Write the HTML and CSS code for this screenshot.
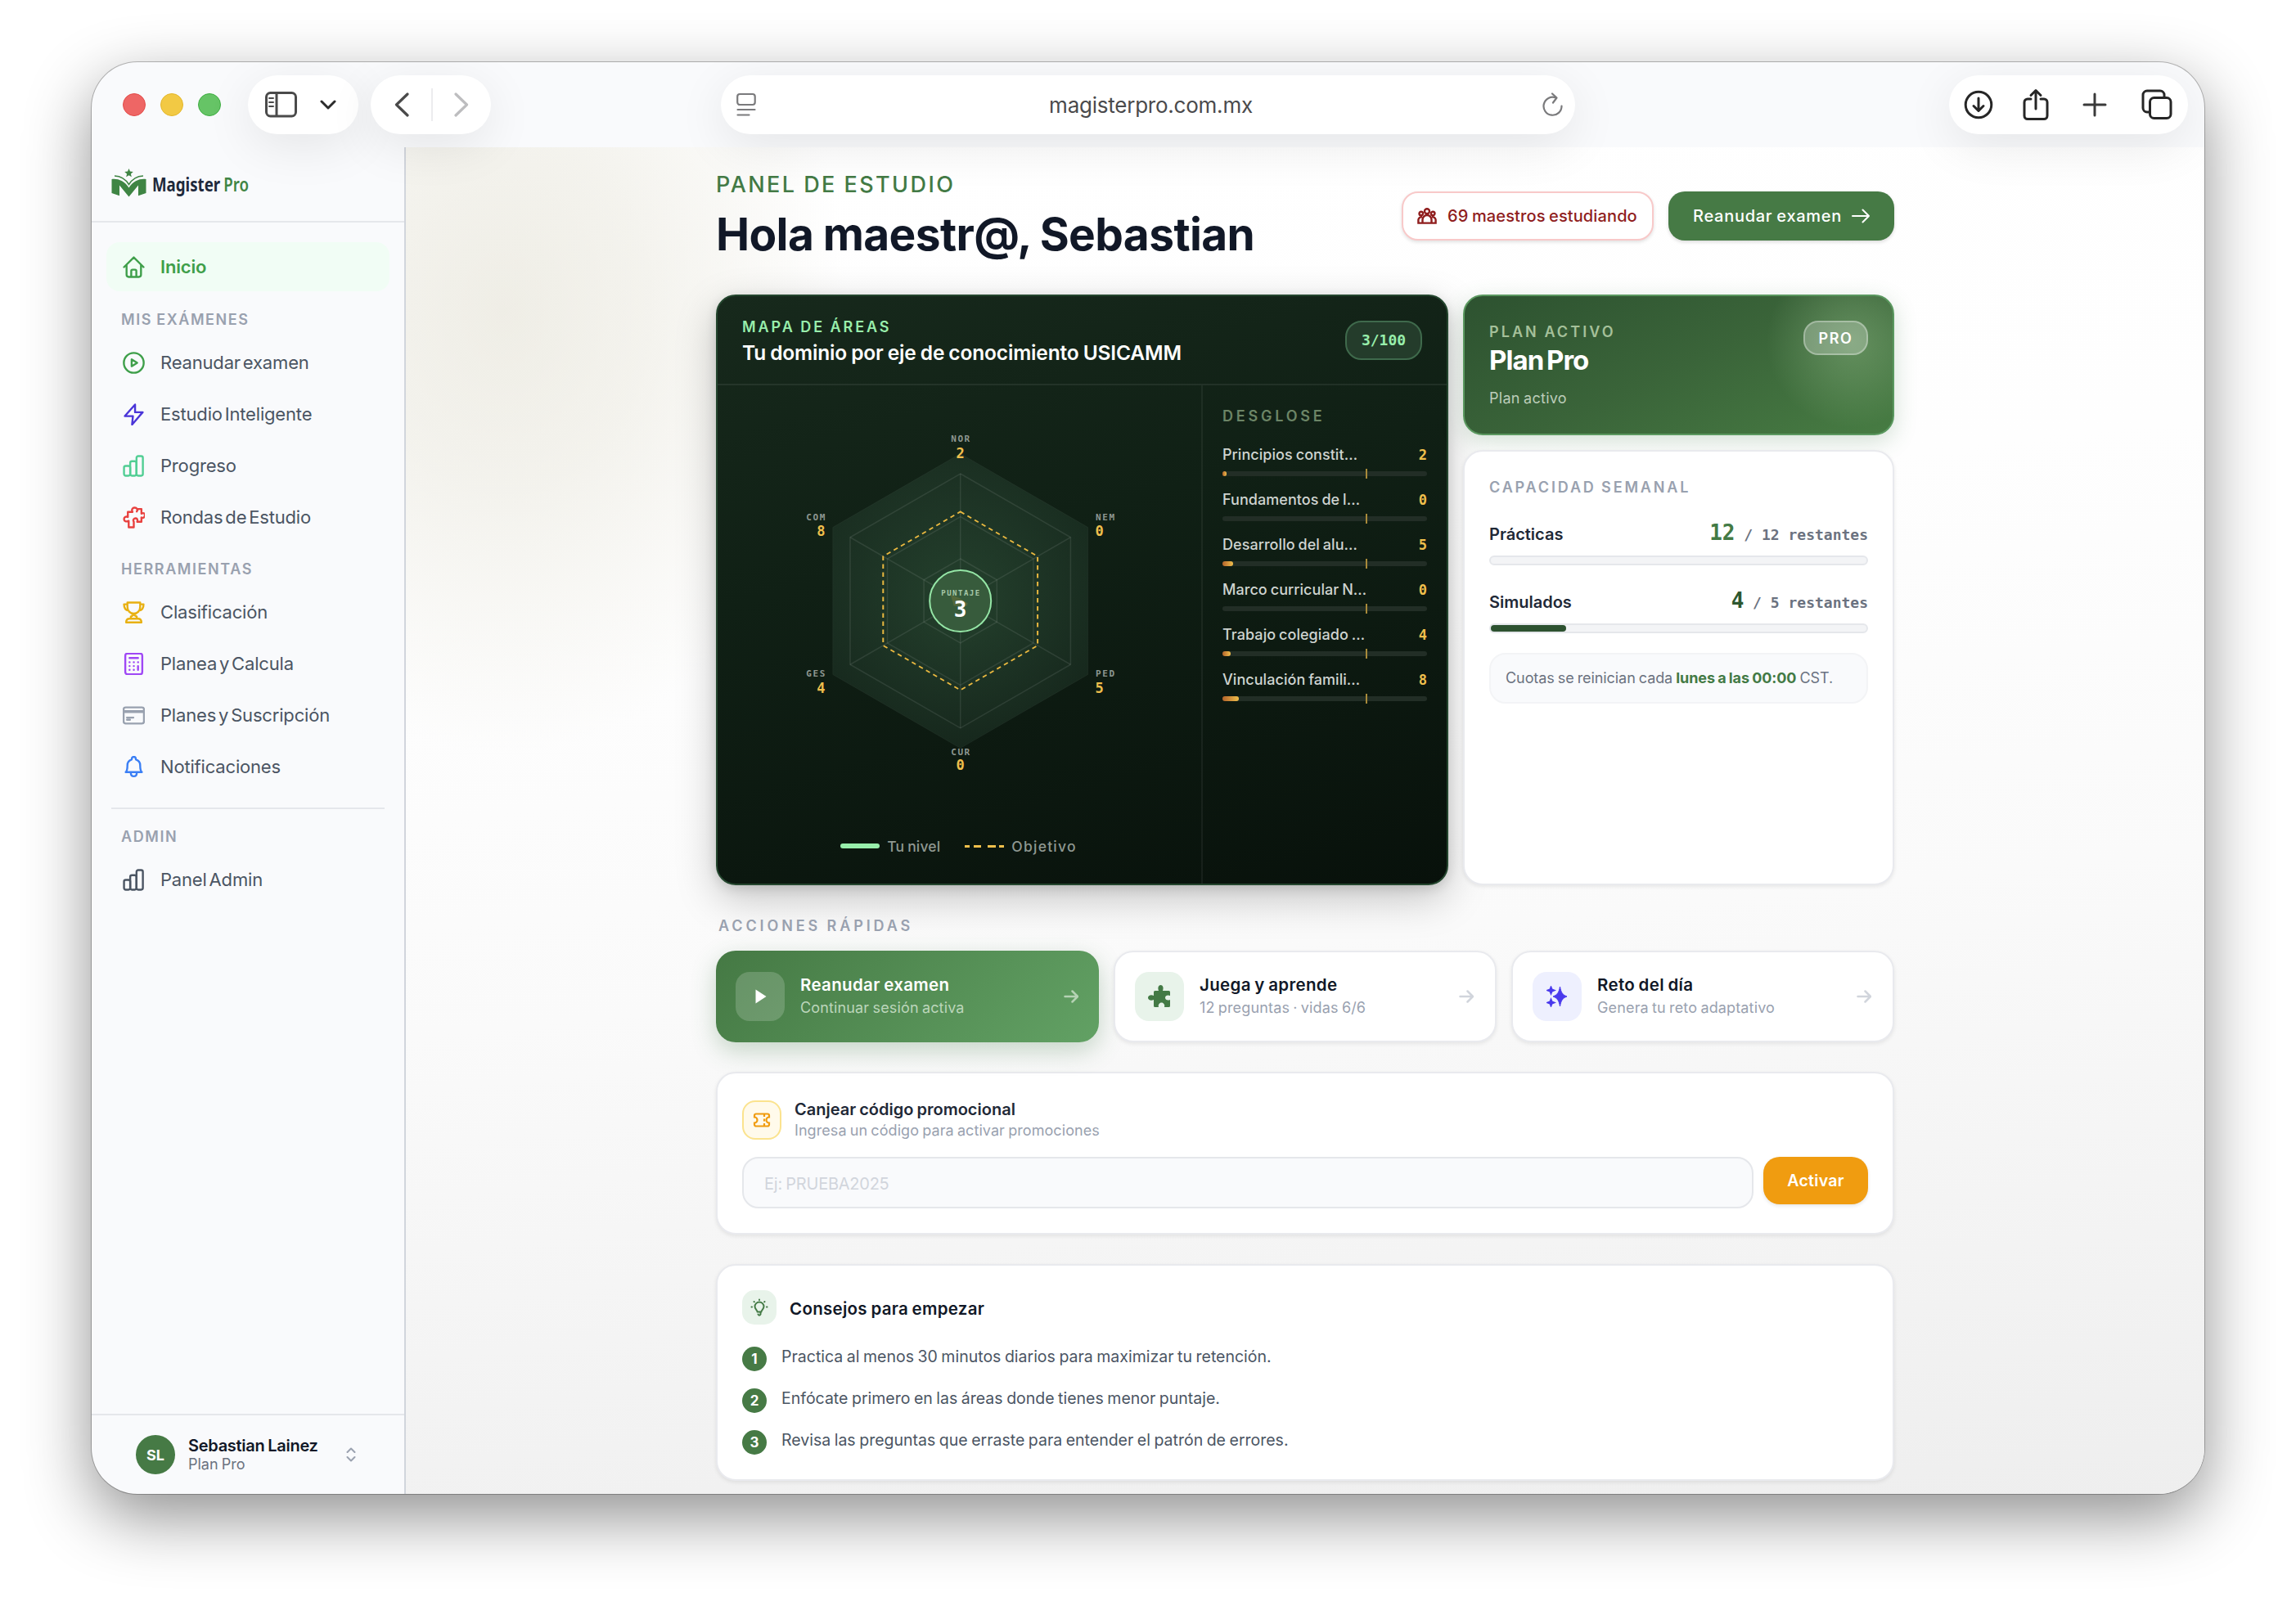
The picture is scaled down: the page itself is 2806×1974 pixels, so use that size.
FILE: index.html
```html
<!DOCTYPE html>
<html lang="es">
<head>
<meta charset="utf-8">
<title>Magister Pro</title>
<link rel="stylesheet" href="styles.css">
</head>
<body>
<div class="window">
  <header class="toolbar">
    <div class="lights"><i class="red"></i><i class="yellow"></i><i class="green"></i></div>
    <div class="pill pill-side">
      <svg width="40" height="32" viewBox="0 0 40 32" fill="none" stroke="#4a4a4a" stroke-width="3"><rect x="1.5" y="1.5" width="36" height="28.5" rx="5"/><path d="M14 2v28"/><path d="M5 8h5M5 13h5M5 18h5" stroke-width="2" stroke-linecap="round"/></svg>
      <svg width="20" height="12" viewBox="0 0 20 12" fill="none" stroke="#2b2b2b" stroke-width="3" stroke-linecap="round" stroke-linejoin="round"><path d="M2 2l8 8 8-8"/></svg>
    </div>
    <div class="pill pill-nav">
      <svg width="18" height="30" viewBox="0 0 18 30" fill="none" stroke="#4a4a4a" stroke-width="3.2" stroke-linecap="round" stroke-linejoin="round"><path d="M16 2L2.500 15 16 28"/></svg>
      <span class="vline"></span>
      <svg width="18" height="30" viewBox="0 0 18 30" fill="none" stroke="#bdbdbf" stroke-width="3.2" stroke-linecap="round" stroke-linejoin="round"><path d="M2 2l13.500 13L2 28"/></svg>
    </div>
    <div class="pill pill-url">
      <svg width="24" height="30" viewBox="0 0 24 30" fill="none" stroke="#7a7a7c" stroke-width="2.200" stroke-linecap="round"><rect x="1.200" y="2" width="21.500" height="13" rx="3"/><path d="M1.500 21h21M1.500 27.500h14"/></svg>
      <span class="url">magisterpro.com.mx</span>
      <svg width="26" height="30" viewBox="0 0 26 30" fill="none" stroke="#7a7a7c" stroke-width="2.200" stroke-linecap="round" stroke-linejoin="round"><path d="M23.500 16.500A11 11 0 1 1 16.500 6.500"/><path d="M12 1.500l5.500 5-4.500 6"/></svg>
    </div>
    <div class="pill pill-actions">
      <svg width="36" height="36" viewBox="0 0 36 36" fill="none" stroke="#262626" stroke-width="3" stroke-linecap="round" stroke-linejoin="round"><circle cx="18" cy="18" r="15.800"/><path d="M18 10v15M12 19.500l6 6 6-6"/></svg>
      <svg class="share" width="32" height="40" viewBox="0 0 32 40" fill="none" stroke="#262626" stroke-width="3" stroke-linecap="round" stroke-linejoin="round"><path d="M10 13H6a4 4 0 0 0-4 4v16.500a4 4 0 0 0 4 4h20a4 4 0 0 0 4-4V17a4 4 0 0 0-4-4h-4M16 25V3M10 8.500l6-6 6 6"/></svg>
      <svg width="30" height="30" viewBox="0 0 30 30" fill="none" stroke="#3a3a3a" stroke-width="3" stroke-linecap="round"><path d="M15 2v26M2 15h26"/></svg>
      <svg width="38" height="38" viewBox="0 0 38 38" fill="none" stroke="#262626" stroke-width="3" stroke-linejoin="round"><rect x="10.500" y="10.500" width="25.500" height="25" rx="5"/><path d="M10 28H7a5 5 0 0 1-5-5V7a5 5 0 0 1 5-5h16a5 5 0 0 1 5 5v3"/></svg>
    </div>
  </header>

  <div class="body">
    <aside class="sidebar">
      <div class="brand">
        <svg width="44" height="36" viewBox="0 0 44 36" fill="#3f8544"><path d="M21.500 0l1.500 3.600 3.800.3-2.900 2.500.9 3.800-3.300-2-3.300 2 .9-3.800-2.900-2.500 3.800-.3z"/><path d="M.5 13C8 12 16 15 21.500 23.500 27 15 35 12 42.500 13v17L33 33.200V20.500L21.500 34.500 10 20.500v12.700L.5 30z"/><path d="M4 9c7.500.3 13.500 4 17.500 10.500C25.500 13 31.500 9.300 39 9" fill="none" stroke="#3f8544" stroke-width="1.500"/></svg>
        <svg class="brand-name" width="122" height="36" viewBox="0 0 122 36"><text x="0" y="28" textLength="118" lengthAdjust="spacingAndGlyphs">Magister <tspan>Pro</tspan></text></svg>
      </div>
      <nav class="nav">
        <a class="item active"><svg class="ic" viewBox="0 0 26 26"><path d="M1.500 13L13 1.500 24.500 13M4.500 10.500V22a2.500 2.500 0 0 0 2.500 2.500h12a2.500 2.500 0 0 0 2.500-2.500V10.500M10 24v-6.500a1.500 1.500 0 0 1 1.500-1.500h3a1.500 1.500 0 0 1 1.500 1.500V24"/></svg><span>Inicio</span></a>
        <h6 class="first">MIS EXÁMENES</h6>
        <a class="item"><svg class="ic c-green" viewBox="0 0 26 26"><circle cx="13" cy="13" r="11.700"/><path d="M10.500 9v8l6.500-4z"/></svg><span>Reanudar examen</span></a>
        <a class="item"><svg class="ic c-indigo" viewBox="0 0 26 26"><path d="M14.500 1.500L2.500 15H12l-1 10L23.500 10.500h-9z"/></svg><span>Estudio Inteligente</span></a>
        <a class="item"><svg class="ic c-mint" viewBox="0 0 26 26"><rect x="1.500" y="13" width="7.300" height="11.500" rx="2"/><rect x="8.800" y="7.500" width="7.300" height="17" rx="2"/><rect x="16.200" y="1.500" width="7.500" height="23" rx="2"/></svg><span>Progreso</span></a>
        <a class="item"><svg class="ic c-red" viewBox="0 0 26 26"><path d="M6 6.500h5.500c-1.500-3 0-5 2.500-5s4 2 2.500 4.500L18 3h4v5.500c3-1.500 4 0 4 2s-2 4-4 2.500V18h-5c1-3-.5-4-2-4s-3.500 1.500-2 4V24.500H7V17c-3 1.500-5.500.5-5.500-2s2.500-3.500 4.500-2.500z"/></svg><span>Rondas de Estudio</span></a>
        <h6 class="second">HERRAMIENTAS</h6>
        <a class="item"><svg class="ic c-yellow" viewBox="0 0 26 26"><path d="M5.500 1.500h15v5c0 4.500-3 8-7.500 8s-7.500-3.500-7.500-8zM5.500 3.500H1.500c0 5 2 7 5.500 7.500M20.500 3.500h4c0 5-2 7-5.500 7.500M13 14.500c0 2-1.500 2.500-3.500 3.500v2.500h7V18c-2-1-3.500-1.500-3.500-3.500M4 24.800c0-3 2-4.300 4-4.300h10c2 0 4 1.300 4 4.300z"/></svg><span>Clasificación</span></a>
        <a class="item"><svg class="ic c-purple" viewBox="0 0 26 26"><rect x="3" y="0.800" width="20" height="24.400" rx="2.500"/><path d="M8 6h10M8 11h.1M13 11h.1M18 11h.1M8 15.500h.1M13 15.500h.1M8 20h.1M13 20h.1M18 15.500V20"/></svg><span>Planea y Calcula</span></a>
        <a class="item"><svg class="ic c-gray" viewBox="0 0 26 26"><rect x="1" y="3.500" width="24" height="19" rx="2.500"/><path d="M1 7.800h24M1 9h24M5 15.500h7.500M5 18h3.500"/></svg><span>Planes y Suscripción</span></a>
        <a class="item"><svg class="ic c-blue" viewBox="0 0 26 26"><path d="M3.500 19c2-1.500 2-4 2-8 0-3.500 2.500-6 5-6.800C10.500 2 11.500 1 13 1s2.500 1 2.500 3.200c2.500.8 5 3.300 5 6.800 0 4 0 6.500 2 8zM9.500 20c0 2.500 1.500 4 3.500 4s3.500-1.500 3.500-4"/></svg><span>Notificaciones</span></a>
        <hr>
        <h6>ADMIN</h6>
        <a class="item"><svg class="ic" viewBox="0 0 26 26"><rect x="1.500" y="13" width="7.300" height="11.500" rx="2"/><rect x="8.800" y="7.500" width="7.300" height="17" rx="2"/><rect x="16.200" y="1.500" width="7.500" height="23" rx="2"/></svg><span>Panel Admin</span></a>
      </nav>
      <div class="user">
        <span class="avatar">SL</span>
        <div class="who"><span class="who-name">Sebastian Lainez</span><span class="who-plan">Plan Pro</span></div>
        <svg width="12" height="18" viewBox="0 0 12 18" fill="none" stroke="#9aa1af" stroke-width="2" stroke-linecap="round" stroke-linejoin="round"><path d="M1.500 6L6 1.500 10.500 6M1.500 12L6 16.500 10.500 12"/></svg>
      </div>
    </aside>

    <main class="main">
      <div class="content">
        <section class="hero">
          <div>
            <div class="eyebrow">PANEL DE ESTUDIO</div>
            <h1>Hola maestr@, Sebastian</h1>
          </div>
          <div class="hero-actions">
            <span class="chip"><svg width="24" height="20" viewBox="0 0 24 20" fill="none" stroke="#8f1d1d" stroke-width="2.400"><circle cx="12" cy="4.200" r="3"/><circle cx="4.800" cy="7" r="2.300"/><circle cx="19.200" cy="7" r="2.300"/><path d="M6.500 18.600v-4.100a5.500 5.500 0 0 1 11 0v4.100zM6.500 18.600H1.400v-4a4 4 0 0 1 4.600-3.400M17.500 18.600h5.100v-4a4 4 0 0 0-4.600-3.400"/></svg><span>69 maestros estudiando</span></span>
            <span class="btn-green"><span>Reanudar examen</span><svg width="22" height="18" viewBox="0 0 22 18" fill="none" stroke="#fff" stroke-width="2" stroke-linecap="round" stroke-linejoin="round"><path d="M1 9h20M13.500 1.500L21 9l-7.500 7.500"/></svg></span>
          </div>
        </section>

        <section class="top-grid">
          <div class="map">
            <div class="map-head">
              <div>
                <div class="map-eyebrow">MAPA DE ÁREAS</div>
                <div class="map-title">Tu dominio por eje de conocimiento USICAMM</div>
              </div>
              <span class="map-score">3/100</span>
            </div>
            <div class="map-body">
              <div class="radar">
                <svg width="591" height="540" viewBox="0 0 591 540">
                  <defs><radialGradient id="glow" cx="0" cy="0" r="180" gradientUnits="userSpaceOnUse"><stop offset="0" stop-color="#5a9a6c" stop-opacity=".28"/><stop offset="1" stop-color="#5a8a70" stop-opacity=".12"/></radialGradient></defs>
                  <g transform="translate(296.700 263.500)" fill="none">
                    <path d="M0-180L155.900-90V90L0 180-155.900 90V-90z" fill="url(#glow)" stroke="#fff" stroke-opacity=".04"/>
                    <g stroke="#fff" stroke-opacity=".09" stroke-width="1.500">
                      <path d="M0-155.500L134.700-77.750V77.750L0 155.500-134.700 77.750V-77.750z"/>
                      <path d="M0-103L89.200-51.500V51.500L0 103-89.200 51.500V-51.500z"/>
                      <path d="M0-51.500L44.600-25.750V25.750L0 51.500-44.600 25.750V-25.750z"/>
                      <path d="M0-155.500V155.500M-134.700-77.750L134.700 77.750M134.700-77.750L-134.700 77.750"/>
                    </g>
                    <path d="M0-109L94.400-54.500V54.500L0 109-94.400 54.500V-54.500z" stroke="#e9b840" stroke-width="2" stroke-dasharray="5.500 4.500"/>
                    <circle r="37.500" fill="#375b3c" stroke="#95e6a6" stroke-width="2"/>
                    <path d="M0-3L9 3 8 6-8 6-12-8z" fill="#d9a93a" fill-opacity=".18"/>
                  </g>
                  <g class="axis" text-anchor="middle"><text x="297.500" y="69">NOR</text><text x="297.500" y="452">CUR</text></g>
                  <g class="axis" text-anchor="end"><text x="133" y="165">COM</text><text x="133" y="356">GES</text></g>
                  <g class="axis"><text x="462" y="165">NEM</text><text x="462" y="356">PED</text></g>
                  <g class="val" text-anchor="middle"><text x="296.700" y="88.500">2</text><text x="296.700" y="470">0</text></g>
                  <g class="val" text-anchor="end"><text x="131.500" y="184">8</text><text x="131.500" y="375.500">4</text></g>
                  <g class="val"><text x="461.500" y="184">0</text><text x="461.500" y="375.500">5</text></g>
                  <text class="pt-label" x="297.500" y="257" text-anchor="middle">PUNTAJE</text>
                  <text class="pt-value" x="296.700" y="282.500" text-anchor="middle">3</text>
                </svg>
                <div class="legend">
                  <span><i class="solid"></i><em>Tu nivel</em></span>
                  <span><i class="dashed"></i><em class="wide">Objetivo</em></span>
                </div>
              </div>
              <div class="breakdown">
                <div class="bd-title">DESGLOSE</div>
                <div class="bd"><p><span>Principios constit…</span><b>2</b></p><div class="track"><i style="width:2%"></i></div></div>
                <div class="bd"><p><span>Fundamentos de l…</span><b>0</b></p><div class="track"><i style="width:0"></i></div></div>
                <div class="bd"><p><span>Desarrollo del alu…</span><b>5</b></p><div class="track"><i style="width:5.200%"></i></div></div>
                <div class="bd"><p><span>Marco curricular N…</span><b>0</b></p><div class="track"><i style="width:0"></i></div></div>
                <div class="bd"><p><span>Trabajo colegiado …</span><b>4</b></p><div class="track"><i style="width:4%"></i></div></div>
                <div class="bd"><p><span>Vinculación famili…</span><b>8</b></p><div class="track"><i style="width:8%"></i></div></div>
              </div>
            </div>
          </div>

          <div class="right-col">
            <div class="plan">
              <div class="plan-row">
                <div>
                  <div class="plan-eyebrow">PLAN ACTIVO</div>
                  <div class="plan-name">Plan Pro</div>
                </div>
                <span class="plan-badge">PRO</span>
              </div>
              <div class="plan-note">Plan activo</div>
            </div>
            <div class="card quota">
              <div class="label">CAPACIDAD SEMANAL</div>
              <div class="q-row"><strong>Prácticas</strong><span><b>12</b> / 12 restantes</span></div>
              <div class="q-bar"></div>
              <div class="q-row"><strong>Simulados</strong><span><b class="dark">4</b> / 5 restantes</span></div>
              <div class="q-bar"><i style="width:20%"></i></div>
              <div class="q-note"><span>Cuotas se reinician cada <b>lunes a las 00:00</b> CST.</span></div>
            </div>
          </div>
        </section>

        <div class="label quick-label"><span>ACCIONES RÁPIDAS</span></div>
        <section class="quick">
          <div class="card act primary">
            <span class="tile"><svg width="16" height="20" viewBox="0 0 16 20" fill="#fff"><path d="M2.500 1.500l13 8.500-13 8.500z"/></svg></span>
            <div class="act-text"><strong>Reanudar examen</strong><span>Continuar sesión activa</span></div>
            <svg class="arr" viewBox="0 0 18 16"><path d="M1.500 8h15M10.500 1.500L17 8l-6.500 6.500"/></svg>
          </div>
          <div class="card act">
            <span class="tile green-tile"><svg width="30" height="30" viewBox="0 0 30 30" fill="#437a45"><path d="M8 9.500A1.500 1.500 0 0 1 9.500 8H14c-1.500-4 0-7 2.500-7S20.500 4 19 8h7.500A1.500 1.500 0 0 1 28 9.500V14c-3-1.500-6 0-6 2.500s3 4 6 2.500v7.500a1.500 1.500 0 0 1-1.500 1.500H21c1-3-1-5.500-3.500-5.500S13 25 14 28H9.500A1.500 1.500 0 0 1 8 26.500V19c-4 2-7-.5-7-2.500s3-4.500 7-2.500z"/></svg></span>
            <div class="act-text"><strong>Juega y aprende</strong><span>12 preguntas · vidas 6/6</span></div>
            <svg class="arr" viewBox="0 0 18 16"><path d="M1.500 8h15M10.500 1.500L17 8l-6.500 6.500"/></svg>
          </div>
          <div class="card act">
            <span class="tile indigo-tile"><svg width="26" height="26" viewBox="0 0 26 26" fill="#4a3aed"><path d="M16.500 1c1.300 7 3 10 8.500 12-5.500 2-7.200 5-8.500 12C15.200 18 13.500 15 8 13c5.500-2 7.200-5 8.500-12z" stroke="#4a3aed"/><path d="M5.500 1l1.300 3.200L10 5.500 6.800 6.800 5.500 10 4.200 6.800 1 5.500l3.200-1.300zM5.500 16l1.300 3.200L10 20.500l-3.200 1.300L5.500 25l-1.300-3.200L1 20.500l3.200-1.300z" stroke="#4a3aed" stroke-width="1.500"/></svg></span>
            <div class="act-text"><strong>Reto del día</strong><span>Genera tu reto adaptativo</span></div>
            <svg class="arr" viewBox="0 0 18 16"><path d="M1.500 8h15M10.500 1.500L17 8l-6.500 6.500"/></svg>
          </div>
        </section>

        <section class="card promo">
          <div class="promo-head">
            <span class="promo-ic"><svg width="22" height="18" viewBox="0 0 22 18" fill="none" stroke="#f09c10" stroke-width="2.200"><path d="M2 5.500V3.500A2 2 0 0 1 4 1.500h14a2 2 0 0 1 2 2v2a3.500 3.500 0 0 0 0 7v2a2 2 0 0 1-2 2H4a2 2 0 0 1-2-2v-2a3.500 3.500 0 0 0 0-7z"/><path d="M14 2v3M14 7.500v3M14 13v3"/></svg></span>
            <div><strong>Canjear código promocional</strong><span>Ingresa un código para activar promociones</span></div>
          </div>
          <div class="promo-form">
            <div class="input"><span>Ej: PRUEBA2025</span></div>
            <span class="btn-orange"><span>Activar</span></span>
          </div>
        </section>

        <section class="card tips">
          <div class="tips-head">
            <span class="tips-ic"><svg width="22" height="22" viewBox="0 0 22 22" fill="none" stroke="#437a45" stroke-width="2" stroke-linecap="round"><path d="M8.500 16c0-1.500-3-3-3-6a5.500 5.500 0 0 1 11 0c0 3-3 4.500-3 6M8.500 16.500h5M9.500 19.500c.5 1.500 2.500 1.500 3 0v-3M11 1.500v.5M4.500 4l.3.3M17.500 4l-.3.3M1.500 10.500H2M20 10.500h.5"/></svg></span>
            <strong>Consejos para empezar</strong>
          </div>
          <ol>
            <li><i>1</i><span>Practica al menos 30 minutos diarios para maximizar tu retención.</span></li>
            <li><i>2</i><span>Enfócate primero en las áreas donde tienes menor puntaje.</span></li>
            <li><i>3</i><span>Revisa las preguntas que erraste para entender el patrón de errores.</span></li>
          </ol>
        </section>
      </div>
    </main>
  </div>
</div>
</body>
</html>
```
FILE: styles.css
```css
* { box-sizing: border-box; margin: 0; padding: 0; }
body { background: #fff; padding: 76px 112px 0; font-family: Inter, "Liberation Sans", sans-serif; color: #111827; word-spacing: -.06em; height: 1974px; overflow: hidden; }
svg { display: block; flex: none; }
.window { width: 2582px; height: 1750px; border-radius: 56px; overflow: hidden; background: #f9fafc; box-shadow: 0 0 0 1px rgba(0,0,0,.25), 0 28px 80px rgba(0,0,0,.44); display: flex; flex-direction: column; }

.toolbar { height: 104px; flex: none; display: flex; align-items: flex-start; padding: 16px 20px 0 38px; position: relative; z-index: 2; }
.lights { display: flex; gap: 18px; padding-top: 22px; width: 153px; flex: none; }
.lights i { width: 28px; height: 28px; border-radius: 50%; border: 1.5px solid; }
.lights .red { background: #ee6665; border-color: #e24b49; }
.lights .yellow { background: #f2c944; border-color: #e3b62b; }
.lights .green { background: #66c466; border-color: #3fae43; }
.pill { height: 72px; border-radius: 36px; background: #fff; display: flex; align-items: center; box-shadow: 0 14px 60px rgba(0,0,0,.085); flex: none; }
.pill-side { width: 135px; padding-left: 21px; gap: 27px; }
.pill-nav { width: 147px; margin-left: 15px; padding: 0 27px 0 29px; justify-content: space-between; }
.vline { width: 2px; height: 40px; background: #ececee; }
.pill-url { width: 1044px; margin-left: 281px; padding: 0 14px 0 19px; justify-content: space-between; }
.url { font-size: 26px; color: #4a4a4c; letter-spacing: -.009em; padding-left: 4px; }
.pill-actions { width: 292px; margin-left: auto; padding: 0 19px 0 18px; justify-content: space-between; }
.share { margin-left: -6px; }

.body { display: flex; flex: 1; }
.sidebar { width: 384px; border-right: 2px solid #d1d5dc; display: flex; flex-direction: column; flex: none; }
.brand { height: 92px; border-bottom: 2px solid #e5e7eb; display: flex; align-items: flex-start; padding: 26px 0 0 24px; gap: 6px; }
.brand-name text { font: 700 23px "Noto Sans", sans-serif; fill: #1e293b; }
.brand-name tspan { fill: #3f8544; font-weight: 600; }
.nav { padding: 24px 18px 0; flex: 1; display: flex; flex-direction: column; }
.item { height: 60px; display: flex; align-items: center; gap: 19px; padding-left: 20px; border-radius: 16px; font-size: 22px; color: #4b5563; margin-bottom: 3px; letter-spacing: -.008em; word-spacing: -.14em; }
.item.active { background: #f1fdf5; color: #3f9f4a; font-weight: 600; margin-bottom: 0; }
.ic { width: 27px; height: 27px; fill: none; stroke: currentColor; stroke-width: 2.300; stroke-linecap: round; stroke-linejoin: round; }
.c-green { color: #3f9f4a; } .c-indigo { color: #4a35d8; } .c-mint { color: #52ce94; } .c-red { color: #e8413f; } .c-yellow { color: #e8b011; } .c-purple { color: #9f47f5; } .c-gray { color: #99a1af; } .c-blue { color: #3b7ff5; }
.nav h6 { font-size: 18px; line-height: 24px; font-weight: 600; color: #99a1af; padding: 22px 0 10px 18px; letter-spacing: .088em; }
.nav h6.first { padding-top: 23px; }
.nav h6.second { padding-top: 19px; }
.nav hr { border: 0; height: 2px; background: #e5e7eb; margin: 17px 6px 0; }
.user { height: 98px; border-top: 2px solid #e5e7eb; display: flex; align-items: center; padding-left: 54px; }
.avatar { width: 48px; height: 48px; border-radius: 50%; background: #467a45; color: #fff; font-weight: 700; font-size: 18px; display: grid; place-items: center; }
.who { display: flex; flex-direction: column; margin-left: 16px; width: 193px; }
.who-name { font-size: 20px; font-weight: 600; line-height: 23px; letter-spacing: -.014em; }
.who-plan { font-size: 18px; line-height: 22px; color: #6b7280; }

.main { flex: 1; background: radial-gradient(ellipse 420px 540px at 120px 200px, rgba(222,219,203,.48), rgba(222,219,203,.34) 40%, rgba(222,219,203,0)), linear-gradient(174deg, #fff 0, #fefefe 30%, #fafafa 58%, #eee 100%); }
.content { width: 1440px; margin: 0 auto; padding-top: 26px; }
.hero { display: flex; justify-content: space-between; height: 154px; }
.eyebrow { font-size: 27px; line-height: 40px; font-weight: 500; color: #437a45; letter-spacing: .09em; }
.hero h1 { font-size: 55px; line-height: 80px; font-weight: 670; letter-spacing: -.011em; }
.hero-actions { display: flex; gap: 18px; height: 116px; align-items: center; }
.chip { height: 60px; width: 308px; border: 2px solid #f8c9c9; border-radius: 20px; background: #fff; display: flex; align-items: center; gap: 13px; padding-left: 17px; font-size: 20px; color: #8f1d1d; box-shadow: 0 2px 4px rgba(0,0,0,.12); font-weight: 500; letter-spacing: .006em; }
.btn-green { height: 60px; width: 276px; border-radius: 20px; background: #467a45; color: #fff; display: flex; align-items: center; justify-content: space-between; padding: 0 30px; font-size: 20px; font-weight: 500; letter-spacing: .036em; box-shadow: 0 2px 4px rgba(0,0,0,.14); }

.top-grid { display: grid; grid-template-columns: 895px 527px; gap: 18px; height: 722px; }
.map { border: 2px solid #24462e; border-radius: 24px; background: linear-gradient(165deg, #17291c 0, #102015 40%, #08110b 100%); box-shadow: 0 16px 50px rgba(0,0,0,.22), 0 4px 14px rgba(0,0,0,.12); overflow: hidden; }
.map-head { height: 109px; border-bottom: 2px solid rgba(255,255,255,.07); display: flex; justify-content: space-between; align-items: flex-start; padding: 24px 30px 0; }
.map-eyebrow { font-size: 18px; line-height: 28px; font-weight: 600; color: #98eeab; letter-spacing: .163em; }
.map-title { font-size: 24.500px; line-height: 34px; font-weight: 600; color: #fff; letter-spacing: -.006em; }
.map-score { margin-top: 6px; width: 94px; height: 48px; border-radius: 20px; border: 2px solid #3f6a4c; background: #243c2b; color: #98eeab; font: 700 18px/43px "DejaVu Sans Mono", monospace; text-align: center; }
.map-body { display: grid; grid-template-columns: 591px 300px; height: 609px; }
.axis { font: 700 11px "DejaVu Sans Mono", monospace; letter-spacing: 1.600px; fill: #8e9791; }
.val { font: 700 17px "DejaVu Sans Mono", monospace; fill: #efbf4c; }
.pt-label { font: 700 9px "DejaVu Sans Mono", monospace; letter-spacing: 1.500px; fill: #a7c9a9; }
.pt-value { font: 700 26px "DejaVu Sans Mono", monospace; fill: #fff; }
.legend { display: flex; justify-content: center; gap: 30px; height: 46px; padding-right: 2px; color: #8f9891; font-size: 17.500px; font-weight: 500; }
.legend span { display: flex; align-items: center; gap: 9px; }
.legend em { font-style: normal; letter-spacing: .01em; }
.legend em.wide { letter-spacing: .07em; }
.legend i { width: 48px; }
.solid { height: 6px; border-radius: 3px; background: #98eeab; }
.dashed { height: 3px; background: linear-gradient(90deg, #efbf4c 6px, transparent 6px 11px, #efbf4c 11px 20px, transparent 20px 28px, #efbf4c 28px 38px, transparent 38px 42px, #efbf4c 42px); }
.breakdown { border-left: 2px solid rgba(255,255,255,.06); padding: 26px 24px 0; }
.bd-title { font-size: 18px; line-height: 24px; font-weight: 600; color: #6c8566; margin-bottom: 23px; letter-spacing: .21em; }
.bd { height: 55px; }
.bd p { display: flex; justify-content: space-between; line-height: 24px; font-size: 18px; font-weight: 500; color: #cfd4d0; margin-bottom: 8px; letter-spacing: .003em; }
.bd b { font: 700 17px/24px "DejaVu Sans Mono", monospace; color: #efbf4c; }
.track { height: 6px; border-radius: 3px; background: #222e26; position: relative; }
.track i { display: block; height: 6px; border-radius: 3px; background: linear-gradient(90deg, #b4632a, #efbf4c); }
.track::after { content: ""; position: absolute; left: 70%; top: -3px; width: 2px; height: 12px; background: #a88a3a; }

.right-col { display: flex; flex-direction: column; gap: 18px; }
.plan { height: 172px; border-radius: 24px; border: 2px solid #5a985f; background: radial-gradient(circle at 474px 56px, rgba(150,190,140,.42), rgba(150,190,140,.25) 45px, rgba(150,190,140,0) 105px), linear-gradient(155deg, #2d5230 0, #3a6439 50%, #477c43 100%); padding: 30px; box-shadow: 0 8px 28px rgba(60,120,70,.22); }
.plan-row { display: flex; justify-content: space-between; height: 76px; }
.plan-eyebrow { font-size: 18px; line-height: 28px; font-weight: 600; color: #a5c09a; letter-spacing: .17em; }
.plan-name { font-size: 33px; line-height: 40px; font-weight: 700; color: #fff; letter-spacing: -.028em; word-spacing: -.1em; }
.plan-badge { width: 79px; height: 42px; border-radius: 18px; border: 2px solid rgba(255,255,255,.3); background: rgba(255,255,255,.25); color: #fff; font-size: 18px; font-weight: 600; letter-spacing: .09em; text-align: center; line-height: 40px; }
.plan-note { font-size: 18px; line-height: 24px; margin-top: 7px; color: #bccdb9; letter-spacing: .015em; }
.card { background: #fff; border: 2px solid #e9eaee; border-radius: 24px; box-shadow: 0 2px 5px rgba(0,0,0,.08); }
.label { font-size: 18px; line-height: 24px; font-weight: 600; color: #99a1af; letter-spacing: .158em; }
.quota { flex: 1; padding: 32px 30px 0; }
.q-row { display: flex; justify-content: space-between; align-items: center; height: 30px; margin-top: 30px; }
.q-row strong { font-size: 20px; font-weight: 600; color: #1f2937; }
.q-row span { font: 700 18px/30px "DejaVu Sans Mono", monospace; color: #6b7280; word-spacing: 0; }
.q-row b { font-size: 26px; color: #437a45; line-height: 1; }
.q-row b.dark { color: #2d5730; }
.q-bar { height: 12px; border-radius: 6px; border: 2px solid #e5e7eb; background: #f3f4f6; margin-top: 11px; }
.q-bar i { display: block; height: 8px; border-radius: 4px; background: #2d5230; }
.q-note { margin-top: 24px; height: 62px; border-radius: 20px; border: 2px solid #f3f4f6; background: #f9fafc; padding-left: 18px; font-size: 18px; line-height: 58px; color: #6b7280; letter-spacing: -.004em; }
.q-note b { color: #437a45; font-weight: 700; }

.quick-label { padding: 38px 3px 18px; letter-spacing: .216em; }
.quick { display: grid; grid-template-columns: repeat(3, 468px); gap: 18px; }
.act { height: 112px; display: flex; align-items: center; padding: 0 26px 0 24px; }
.primary { border: 0; background: linear-gradient(135deg, #457944, #62a164); padding-right: 25px; box-shadow: 0 10px 30px rgba(60,120,70,.28); }
.tile { width: 60px; height: 60px; border-radius: 17px; display: grid; place-items: center; margin-right: 19px; background: rgba(255,255,255,.18); }
.green-tile { background: #e8f3ea; }
.indigo-tile { background: #eef0fe; }
.act-text { flex: 1; display: flex; flex-direction: column; }
.act-text strong { font-size: 20.500px; font-weight: 600; line-height: 28px; letter-spacing: .016em; }
.act-text span { font-size: 18px; line-height: 28px; color: #99a1af; letter-spacing: .008em; }
.primary strong { color: #fff; }
.primary .act-text span { color: #bcd6bb; }
.arr { width: 18px; height: 16px; fill: none; stroke: #d1d5dc; stroke-width: 2.500; stroke-linecap: round; stroke-linejoin: round; }
.primary .arr { stroke: #b5d2b4; }

.promo { margin-top: 36px; height: 199px; padding: 33px 30px 0; }
.promo-head { display: flex; gap: 16px; align-items: center; height: 48px; }
.promo-ic { width: 48px; height: 48px; border-radius: 16px; border: 2px solid #fbe38e; background: #fffaeb; display: grid; place-items: center; }
.promo-head div { display: flex; flex-direction: column; }
.promo-head strong { font-size: 20px; line-height: 26px; font-weight: 600; color: #1f2937; }
.promo-head div span { font-size: 18px; line-height: 26px; color: #99a1af; letter-spacing: .004em; }
.promo-form { display: flex; gap: 12px; align-items: flex-start; margin-top: 21px; }
.input { flex: 1; height: 63px; border: 2px solid #e5e7eb; border-radius: 20px; background: #f9fafc; padding-left: 25px; line-height: 62px; font-size: 20px; color: #d1d5dc; letter-spacing: -.012em; }
.btn-orange { width: 128px; height: 58px; border-radius: 20px; background: #f09c10; color: #fff; font-weight: 600; font-size: 19.500px; letter-spacing: .016em; text-align: center; line-height: 59px; box-shadow: 0 2px 4px rgba(0,0,0,.1); }

.tips { margin-top: 36px; height: 265px; padding: 30px 30px 0; }
.tips-head { display: flex; gap: 16px; align-items: center; height: 42px; }
.tips-head strong { font-size: 20.500px; font-weight: 600; padding-top: 3px; letter-spacing: .014em; }
.tips-ic { width: 42px; height: 42px; border-radius: 15px; background: #e8f3ea; display: grid; place-items: center; }
.tips ol { list-style: none; margin-top: 27px; display: flex; flex-direction: column; gap: 21px; }
.tips li { display: flex; gap: 18px; height: 30px; line-height: 24px; font-size: 19.500px; color: #4b5563; }
.tips li i { width: 30px; height: 30px; border-radius: 50%; background: #467a45; color: #fff; font-style: normal; font-weight: 700; font-size: 17px; line-height: 31px; text-align: center; flex: none; }
```
